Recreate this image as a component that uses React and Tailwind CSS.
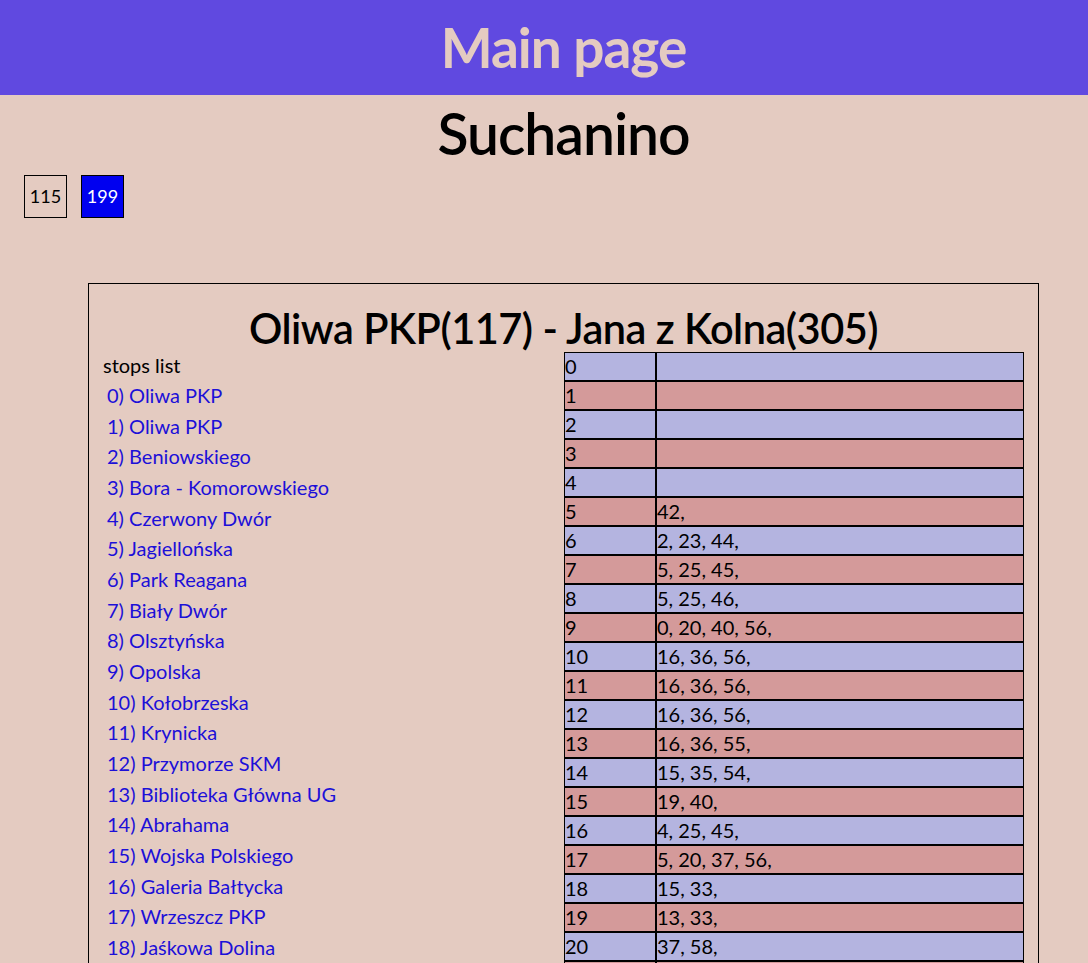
import React from "react";

const stops = [
  "Oliwa PKP",
  "Oliwa PKP",
  "Beniowskiego",
  "Bora - Komorowskiego",
  "Czerwony Dwór",
  "Jagiellońska",
  "Park Reagana",
  "Biały Dwór",
  "Olsztyńska",
  "Opolska",
  "Kołobrzeska",
  "Krynicka",
  "Przymorze SKM",
  "Biblioteka Główna UG",
  "Abrahama",
  "Wojska Polskiego",
  "Galeria Bałtycka",
  "Wrzeszcz PKP",
  "Jaśkowa Dolina",
  "Politechnika",
  "Miszewskiego",
];

const times = [
  "",
  "",
  "",
  "",
  "",
  "42,",
  "2, 23, 44,",
  "5, 25, 45,",
  "5, 25, 46,",
  "0, 20, 40, 56,",
  "16, 36, 56,",
  "16, 36, 56,",
  "16, 36, 56,",
  "16, 36, 55,",
  "15, 35, 54,",
  "19, 40,",
  "4, 25, 45,",
  "5, 20, 37, 56,",
  "15, 33,",
  "13, 33,",
  "37, 58,",
  "18, 38, 58,",
  "20, 40,",
];

const font = { fontFamily: "Lato, 'Open Sans', sans-serif" };

export default function App() {
  return (
    <div className="min-h-[963px] bg-[#e4cbc1] text-black" style={font}>
      <header className="h-[95px] bg-[#6049e0] flex items-center justify-center pl-[39px]">
        <h1 className="text-[55px] font-bold text-[#e4cbc1] leading-none tracking-[-1px]">
          Main page
        </h1>
      </header>
      <h2 className="text-center text-[57px] font-semibold leading-[76px] tracking-[-1px] pl-[39px]">
        Suchanino
      </h2>
      <div className="flex gap-[14px] pl-[24px] mt-[4px]">
        <button className="w-[43px] h-[43px] border border-black text-[18px] bg-transparent">
          115
        </button>
        <button className="w-[43px] h-[43px] border border-black text-[18px] bg-[#0000f0] text-white">
          199
        </button>
      </div>
      <div className="ml-[88px] mt-[65px] w-[951px] border border-black px-[14px] pb-4">
        <h3 className="text-center text-[41.5px] font-semibold leading-[48px] pt-[20px] pb-0 tracking-[-0.5px]">
          Oliwa PKP(117) - Jana z Kolna(305)
        </h3>
        <div className="flex">
          <div className="w-[461px] text-[20px] -mt-[2px]">
            <div className="leading-[30px]">stops list</div>
            {stops.map((s, i) => (
              <div key={i} className="leading-[30.67px] pl-[4px]">
                <a className="text-[#1c10d8]">
                  {i}) {s}
                </a>
              </div>
            ))}
          </div>
          <table className="w-[460px] border-separate border-spacing-0 text-[20px] self-start">
            <tbody>
              {times.map((t, i) => (
                <tr
                  key={i}
                  className={i % 2 === 0 ? "bg-[#b4b4e0]" : "bg-[#d49a9a]"}
                >
                  <td className="w-[92px] border border-black p-0 h-[29px] leading-[27px] align-middle">
                    {i}
                  </td>
                  <td className="border border-black p-0 h-[29px] leading-[27px] align-middle">
                    {t}
                  </td>
                </tr>
              ))}
            </tbody>
          </table>
        </div>
      </div>
    </div>
  );
}
